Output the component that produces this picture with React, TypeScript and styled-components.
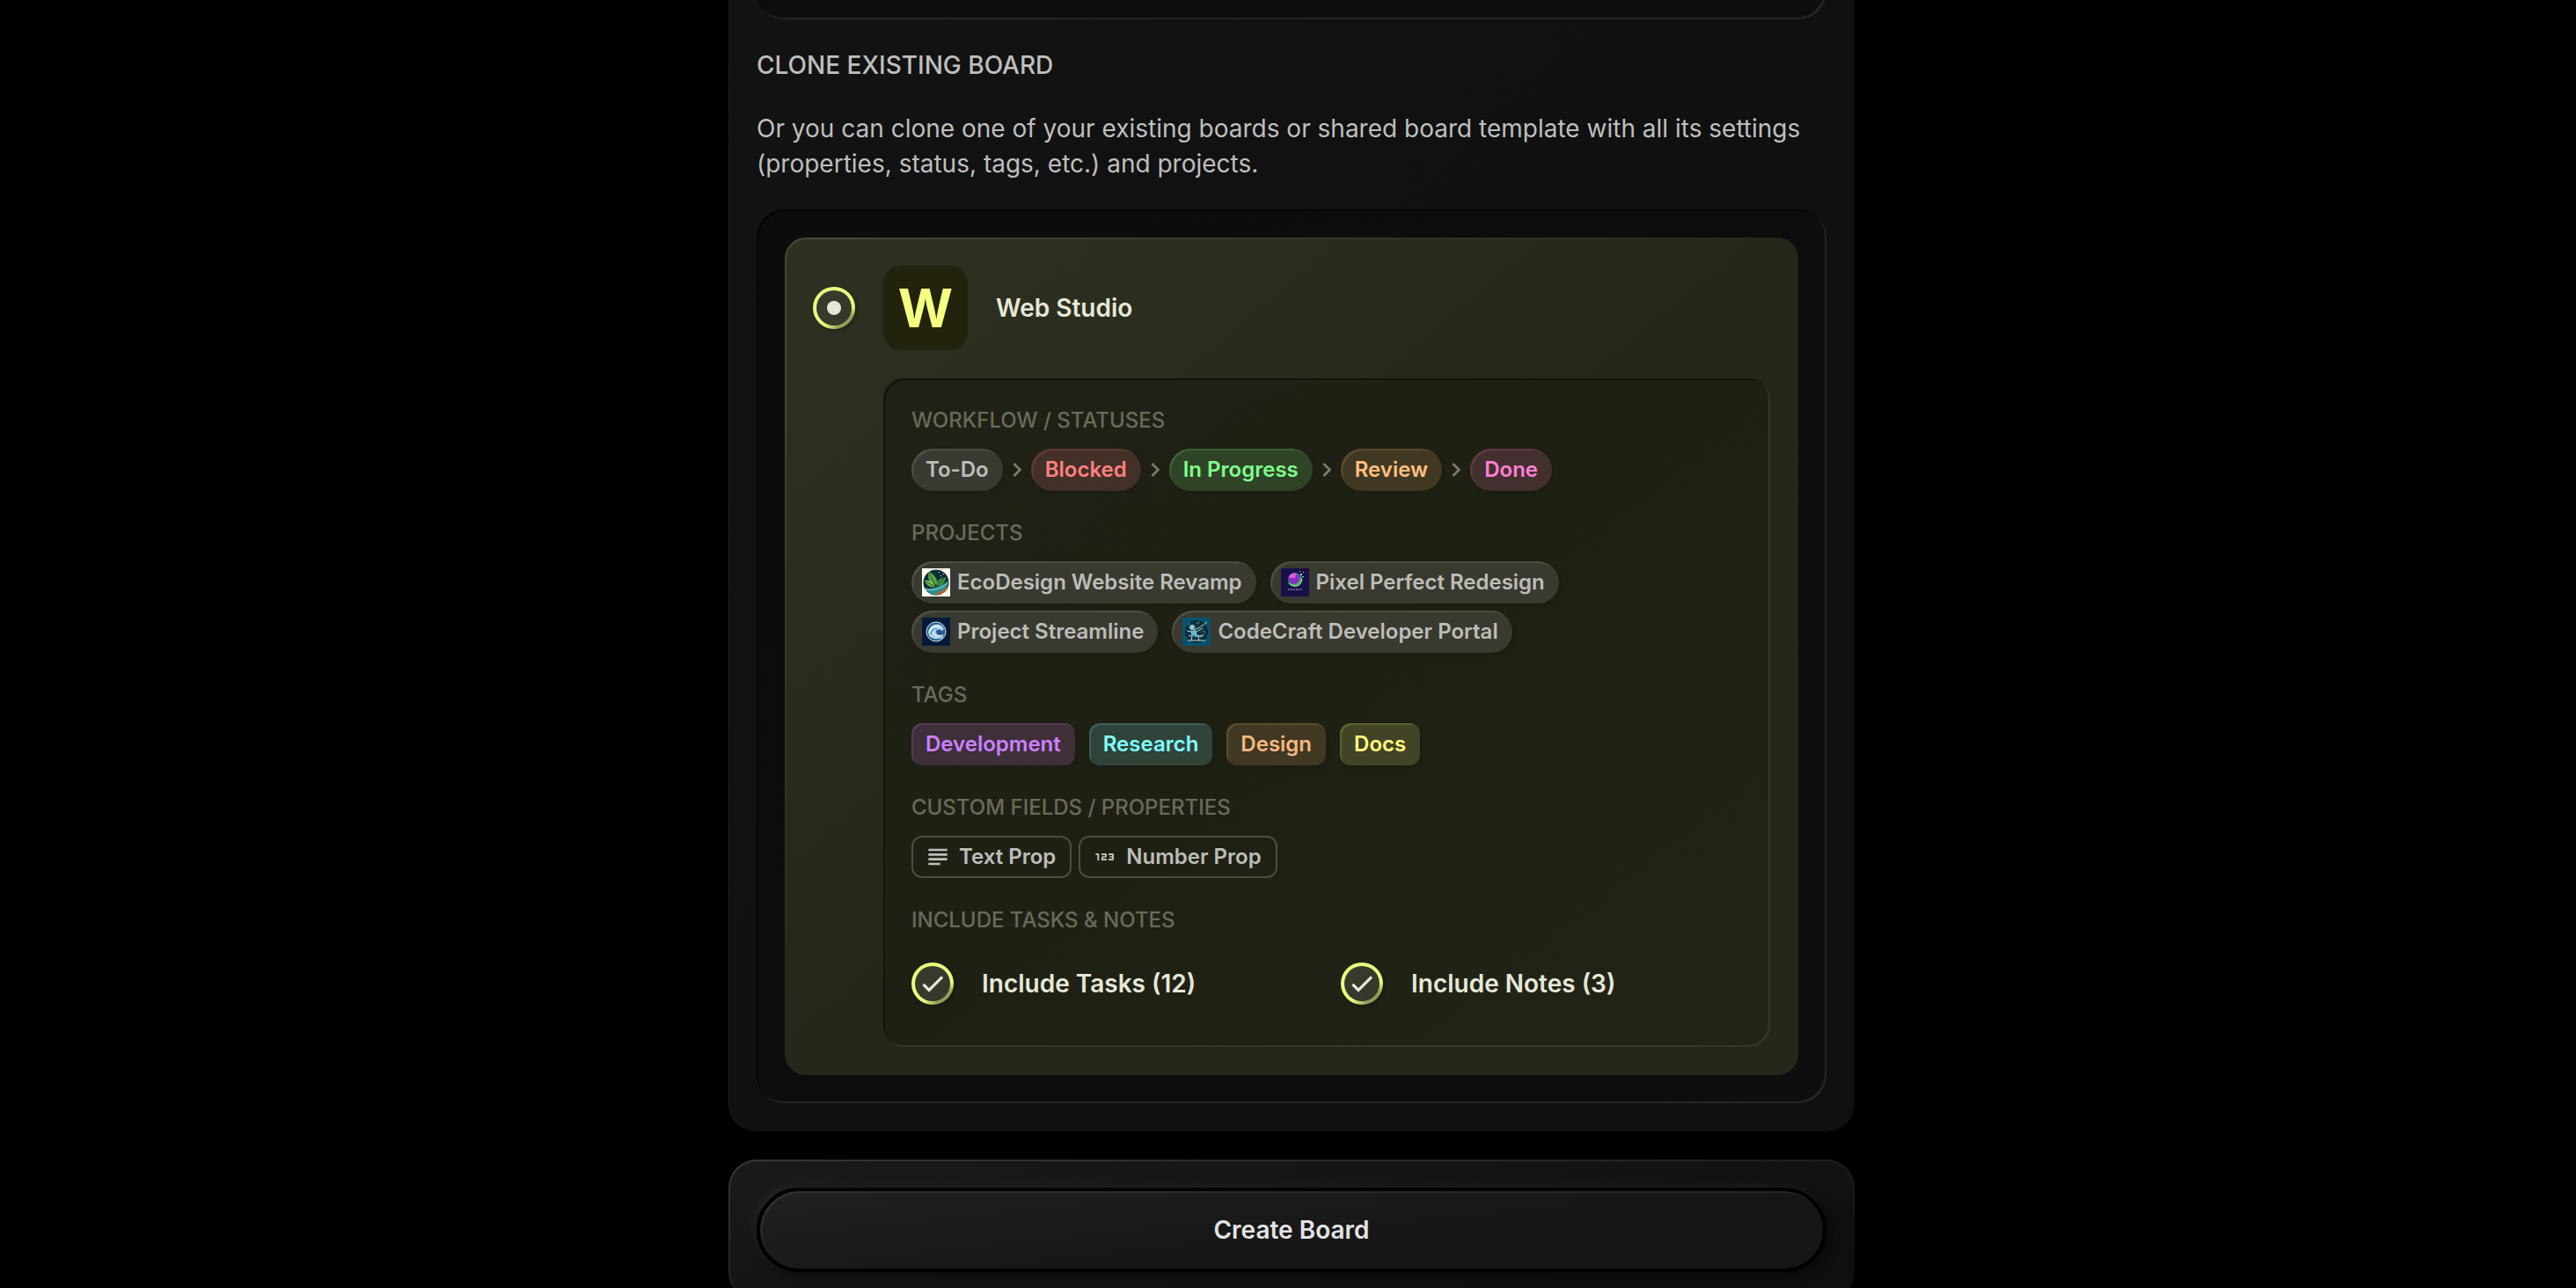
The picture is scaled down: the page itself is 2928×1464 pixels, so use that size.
import React from 'react';
import styled, { createGlobalStyle } from 'styled-components';
import { MdChevronRight, MdSubject, Md123 } from 'react-icons/md';

const GlobalStyle = createGlobalStyle`
  *, *::before, *::after { box-sizing: border-box; }
  html, body { margin: 0; background: #000; }
  body {
    font-family: Inter, "Liberation Sans", sans-serif;
    -webkit-font-smoothing: antialiased;
  }
`;

const Page = styled.main`
  height: 100vh;
  overflow: hidden auto;
  scrollbar-width: none;
  padding-left: 8px;
  background: #000;
`;

const Form = styled.form`
  display: flex;
  flex-direction: column;
  gap: 32px;
  width: 100%;
  max-width: 1280px;
  margin: -74px auto 0;
`;

const Panel = styled.section`
  display: flex;
  flex-direction: column;
  gap: 32px;
  padding: 32px;
  border-radius: 32px;
  background: linear-gradient(to bottom right, #131313, #101010 50%);
  box-shadow: inset 2px 0 1px -1px #202020;
`;

const ActionPanel = styled(Panel)`
  border: 2px solid transparent;
  padding: 30px;
  box-shadow: none;
  background:
    linear-gradient(170deg, #1a1a1a, #0f0f0f 80%) padding-box,
    linear-gradient(to bottom right, #363636, #1f1f1f 50%, #0f0f0f 80%) border-box;
`;

const Well = styled.div`
  padding: 32px;
  border-radius: 32px;
  background: linear-gradient(to bottom right, #0c0c0c, #0e0e0e);
  box-shadow: inset 2px 2px 0 #050505, inset -2px -2px 0 #262626;
`;

const Heading = styled.h2`
  margin: 0;
  font-size: 28px;
  line-height: 40px;
  font-weight: 500;
  text-transform: uppercase;
  color: #bfbfbf;
`;

const Lead = styled.p`
  margin: 0;
  font-size: 28px;
  line-height: 40px;
  color: #bfbfbf;
`;

const BoardCard = styled.article`
  display: grid;
  grid-template-columns: 48px 1fr;
  column-gap: 32px;
  row-gap: 32px;
  padding: 30px;
  border: 2px solid transparent;
  border-radius: 24px;
  background:
    linear-gradient(to bottom right, #2e3121, #2a2d1d 25%, #25271a 50%) padding-box,
    linear-gradient(to bottom right, #484a38, #25271a 50%) border-box;
`;

const Choice = styled.label`
  display: grid;
  grid-template-columns: subgrid;
  grid-column: 1 / -1;
  align-items: center;
  cursor: pointer;
`;

const BoardName = styled.span`
  display: flex;
  align-items: center;
  gap: 32px;
  font-size: 28px;
  line-height: 40px;
  font-weight: 600;
  color: #e6e8d8;
`;

const Tile = styled.span`
  display: grid;
  place-items: center;
  width: 96px;
  height: 96px;
  border-radius: 20px;
  background: #23230d;
  font-size: 60px;
  line-height: 60px;
  font-weight: 700;
  color: #f5ff80;
`;

const Toggle = styled.input`
  appearance: none;
  display: grid;
  place-items: center;
  grid-area: 1 / 1;
  width: 48px;
  height: 48px;
  margin: 0;
  border: 4px solid transparent;
  border-radius: 50%;
  background:
    linear-gradient(to bottom right, #3a3d2d, #333629) padding-box,
    conic-gradient(#eaff80 0 85deg, #929c56 115deg 165deg, #eaff80 210deg) border-box;
  box-shadow: 2px 2px 4px rgba(0, 0, 0, 0.3);
  cursor: pointer;

  &[type='radio']:checked::before {
    content: '';
    width: 16px;
    height: 16px;
    border-radius: 50%;
    background: #e6e8d8;
  }
`;

const CheckIcon = styled.svg`
  grid-area: 1 / 1;
  place-self: center;
  width: 32px;
  height: 32px;
  color: #e6e8d8;
  pointer-events: none;
`;

const CheckMark = () => (
  <CheckIcon viewBox="0 0 24 24" aria-hidden="true">
    <path d="M4.1 12.7L9 17.6L20.3 6.3" fill="none" stroke="currentColor" strokeWidth="2.4" />
  </CheckIcon>
);

const Details = styled.div`
  grid-column: 2;
  display: flex;
  flex-direction: column;
  gap: 32px;
  padding: 32px 32px 48px;
  border-radius: 24px;
  background: linear-gradient(to bottom right, #202117, #1f2014 45%, #232418);
  box-shadow: inset 2px 2px 0 #13140c, inset -2px -2px 0 #35372a;
`;

const Group = styled.section`
  display: flex;
  flex-direction: column;
  gap: 16px;
`;

const GroupTitle = styled.h3`
  margin: 0;
  font-size: 24px;
  line-height: 32px;
  font-weight: 500;
  text-transform: uppercase;
  color: #696b5a;
`;

const Row = styled.ul<{ $gap: number }>`
  display: flex;
  flex-wrap: wrap;
  align-items: center;
  gap: 8px ${p => p.$gap}px;
  margin: 0;
  padding: 0;
  list-style: none;
`;

const Item = styled.li`
  display: flex;
  align-items: center;
`;

const Chevron = styled(MdChevronRight)`
  width: 32px;
  height: 32px;
  color: #7b7d6c;
`;

const Chip = styled.span<{ $rgb: string; $ink: string; $square?: boolean; $media?: boolean }>`
  display: inline-flex;
  align-items: center;
  gap: 8px;
  height: 48px;
  padding: 0 16px 0 ${p => (p.$media ? 12 : 16)}px;
  border-radius: ${p => (p.$square ? 12 : 24)}px;
  font-size: 24px;
  line-height: 32px;
  font-weight: 600;
  color: ${p => p.$ink};
  background: rgba(${p => p.$rgb}, 0.16);
  box-shadow:
    inset 2px 2px 1px rgba(${p => p.$rgb}, 0.16),
    1px 2px 4px rgba(0, 0, 0, 0.18);
`;

const Property = styled.span`
  display: inline-flex;
  align-items: center;
  gap: 8px;
  height: 48px;
  padding: 0 16px 0 12px;
  border: 2px solid #4c4d43;
  border-radius: 12px;
  font-size: 24px;
  line-height: 32px;
  font-weight: 600;
  color: #bdbdb9;

  svg { width: 32px; height: 32px; }
`;

const Thumb = styled.svg`
  width: 32px;
  height: 32px;
  flex: none;
`;

const Options = styled.div`
  display: grid;
  grid-template-columns: 1fr 1fr;
  column-gap: 32px;
  padding-top: 16px;
`;

const Option = styled.label`
  display: grid;
  grid-template-columns: 48px 1fr;
  column-gap: 32px;
  align-items: center;
  font-size: 28px;
  line-height: 40px;
  font-weight: 600;
  color: #e6e8d8;
  cursor: pointer;
`;

const CreateButton = styled.button`
  height: 96px;
  border: 4px solid #000;
  border-radius: 48px;
  font: 600 28px/40px Inter, "Liberation Sans", sans-serif;
  color: #e3e3e3;
  background: linear-gradient(174deg, #212121, #161616 60%);
  box-shadow:
    inset 2px 2px 1px rgba(255, 255, 255, 0.08),
    -4px -4px 12px rgba(255, 255, 255, 0.05),
    4px 4px 12px rgba(0, 0, 0, 0.5);
  cursor: pointer;
`;

const GREY = '191, 191, 191';

const statuses = [
  { name: 'To-Do', rgb: GREY, ink: '#bdbdb9' },
  { name: 'Blocked', rgb: '255, 128, 128', ink: '#ff8080' },
  { name: 'In Progress', rgb: '128, 255, 128', ink: '#80ff8c' },
  { name: 'Review', rgb: '245, 185, 110', ink: '#ffbf80' },
  { name: 'Done', rgb: '255, 128, 185', ink: '#ff80d5' },
];

const tags = [
  { name: 'Development', rgb: '225, 128, 255', ink: '#cc80ff' },
  { name: 'Research', rgb: '128, 255, 255', ink: '#80ffff' },
  { name: 'Design', rgb: '245, 185, 120', ink: '#f5b880' },
  { name: 'Docs', rgb: '255, 255, 128', ink: '#ffff80' },
];

const LeafThumb = () => (
  <Thumb viewBox="0 0 32 32" aria-hidden="true">
    <rect width="32" height="32" fill="#fffdee" />
    <circle cx="16" cy="16" r="14.5" fill="#0d2f35" />
    <path d="M3 22c7 2 15 0 27-8-1 8-6 14-14 16-5 0-10-3-13-8z" fill="#2c8f93" />
    <path d="M14 29c8-2 12-5 16-10 0 6-6 11-13 11z" fill="#b4623a" />
    <path d="M4 24c8 2 18-1 25-7" fill="none" stroke="#9ed6c9" />
    <path d="M14 19C7 16 6 9 8 4c6 3 10 8 9 14z" fill="#5da845" />
    <path d="M16 20c0-6 4-9 11-10 0 6-4 10-11 10z" fill="#418c3b" />
    <path d="M15 21C9 22 5 19 3 14c5-1 10 1 12 7z" fill="#79bd55" />
    <path d="M8 5l7 14M26 10l-10 10M4 15l11 6" stroke="#1d5b2b" fill="none" />
    <path d="M19 4h1v1h-1zM24 6h1v1h-1zM21 8h1v1h-1z" fill="#e8fbf0" />
  </Thumb>
);

const PlanetThumb = () => (
  <Thumb viewBox="0 0 32 32" aria-hidden="true">
    <rect width="32" height="32" fill="#170f47" />
    <circle cx="16" cy="13" r="8" fill="#2d6f8c" />
    <circle cx="15" cy="12" r="6" fill="#8a2bc4" />
    <path d="M9 11a6 6 0 0 1 9-5l-2 5z" fill="#dd58dd" />
    <path d="M9 16c3 5 12 5 14-6" fill="none" stroke="#47b877" strokeWidth="2" />
    <path d="M11 18c4 4 12 3 13-6" fill="none" stroke="#b7ec62" />
    <path d="M22 6h2v2h-2zM25 4h1v1h-1zM24 9h2v1h-2zM21 3h1v1h-1z" fill="#8ff0a5" />
    <path d="M8 24h16" stroke="#b9b4d6" strokeDasharray="2 1" />
  </Thumb>
);

const WaveThumb = () => (
  <Thumb viewBox="0 0 32 32" aria-hidden="true">
    <rect width="32" height="32" fill="#051a38" />
    <circle cx="16" cy="16" r="11" fill="#265a8c" stroke="#d6e5ee" />
    <path d="M7 18c0-8 7-12 13-10 5 2 6 6 3 7-3-2-6-2-7 1 0 4 5 5 9 3-3 6-14 7-18-1z" fill="#a9d0e8" />
    <path d="M8 17c2-6 7-9 12-7M8 20c5 5 12 5 16 2M13 16c0 5 5 6 11 4M14 12c3-2 6-1 8 1" fill="none" stroke="#fff" />
    <path d="M10 19c1-5 4-7 7-7M11 23c3 2 6 2 9 1" fill="none" stroke="#2f6ea5" />
  </Thumb>
);

const RobotThumb = () => (
  <Thumb viewBox="0 0 32 32" aria-hidden="true">
    <rect width="32" height="32" fill="#08536f" />
    <circle cx="16" cy="16" r="12" fill="#15323f" stroke="#0a202b" strokeWidth="2" strokeDasharray="3 1" />
    <circle cx="11" cy="11" r="3" fill="#8fc6d2" />
    <path d="M9 15l6-1 2 6h6v2h-8l-5-3z" fill="#6bb2c4" />
    <path d="M13 14l7-3 8-6M5 15l5 1M7 21l5-1M14 17l9-5" fill="none" stroke="#a6d4da" />
    <path d="M6 26h20M11 21l-1 5M18 22l1 4" fill="none" stroke="#b8dfe1" />
    <path d="M16 7l4-2M23 15l3 2M6 9l3-3M22 19l3 1" stroke="#5094a5" />
  </Thumb>
);

const projects = [
  { name: 'EcoDesign Website Revamp', Art: LeafThumb },
  { name: 'Pixel Perfect Redesign', Art: PlanetThumb },
  { name: 'Project Streamline', Art: WaveThumb },
  { name: 'CodeCraft Developer Portal', Art: RobotThumb },
];

const properties = [
  { name: 'Text Prop', Icon: MdSubject },
  { name: 'Number Prop', Icon: Md123 },
];

const includes = [
  { id: 'include-tasks', name: 'Include Tasks (12)' },
  { id: 'include-notes', name: 'Include Notes (3)' },
];

export default function App() {
  return (
    <Page>
      <GlobalStyle />
      <Form onSubmit={e => e.preventDefault()}>
        <Panel>
          <Well />
          <Heading>Clone existing board</Heading>
          <Lead>
            Or you can clone one of your existing boards or shared board template with all its settings
            (properties, status, tags, etc.) and projects.
          </Lead>
          <Well>
            <BoardCard>
              <Choice htmlFor="board-web-studio">
                <Toggle type="radio" name="board" id="board-web-studio" defaultChecked />
                <BoardName>
                  <Tile aria-hidden="true">W</Tile>
                  Web Studio
                </BoardName>
              </Choice>
              <Details>
                <Group>
                  <GroupTitle>Workflow / Statuses</GroupTitle>
                  <Row $gap={0}>
                    {statuses.map((s, i) => (
                      <Item key={s.name}>
                        {i > 0 && <Chevron aria-hidden="true" />}
                        <Chip $rgb={s.rgb} $ink={s.ink}>{s.name}</Chip>
                      </Item>
                    ))}
                  </Row>
                </Group>
                <Group>
                  <GroupTitle>Projects</GroupTitle>
                  <Row $gap={16}>
                    {projects.map(({ name, Art }) => (
                      <Item key={name}>
                        <Chip $rgb={GREY} $ink="#bdbdb9" $media><Art />{name}</Chip>
                      </Item>
                    ))}
                  </Row>
                </Group>
                <Group>
                  <GroupTitle>Tags</GroupTitle>
                  <Row $gap={16}>
                    {tags.map(t => (
                      <Item key={t.name}>
                        <Chip $rgb={t.rgb} $ink={t.ink} $square>{t.name}</Chip>
                      </Item>
                    ))}
                  </Row>
                </Group>
                <Group>
                  <GroupTitle>Custom fields / Properties</GroupTitle>
                  <Row $gap={8}>
                    {properties.map(({ name, Icon }) => (
                      <Item key={name}>
                        <Property><Icon aria-hidden="true" />{name}</Property>
                      </Item>
                    ))}
                  </Row>
                </Group>
                <Group>
                  <GroupTitle>Include tasks &amp; notes</GroupTitle>
                  <Options>
                    {includes.map(o => (
                      <Option key={o.id} htmlFor={o.id}>
                        <Toggle type="checkbox" id={o.id} defaultChecked />
                        <CheckMark />
                        {o.name}
                      </Option>
                    ))}
                  </Options>
                </Group>
              </Details>
            </BoardCard>
          </Well>
        </Panel>
        <ActionPanel>
          <CreateButton type="submit">Create Board</CreateButton>
        </ActionPanel>
      </Form>
    </Page>
  );
}
